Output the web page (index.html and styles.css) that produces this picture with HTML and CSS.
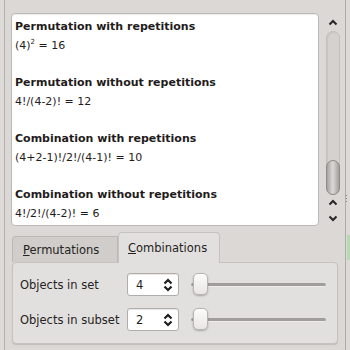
FILE: index.html
```html
<!DOCTYPE html>
<html>
<head>
<meta charset="utf-8">
<link rel="stylesheet" href="styles.css">
</head>
<body>
<div class="window">
  <div class="edge-left"></div>
  <div class="main">
    <div class="top">
      <div class="textview">
        <div class="entry">
          <div class="title">Permutation with repetitions</div>
          <div class="formula">(4)<sup>2</sup> = 16</div>
        </div>
        <div class="entry">
          <div class="title">Permutation without repetitions</div>
          <div class="formula">4!/(4-2)! = 12</div>
        </div>
        <div class="entry">
          <div class="title">Combination with repetitions</div>
          <div class="formula">(4+2-1)!/2!/(4-1)! = 10</div>
        </div>
        <div class="entry">
          <div class="title">Combination without repetitions</div>
          <div class="formula">4!/2!/(4-2)! = 6</div>
        </div>
      </div>
      <div class="scrollbar">
        <div class="arrow-top">
          <svg width="10" height="7" viewBox="0 0 10 7"><polyline points="1.5,5.5 5,2 8.5,5.5" fill="none" stroke="#262626" stroke-width="2"/></svg>
        </div>
        <div class="groove">
          <div class="handle"></div>
        </div>
        <div class="arrows-bottom">
          <svg width="10" height="7" viewBox="0 0 10 7"><polyline points="1.5,5.5 5,2 8.5,5.5" fill="none" stroke="#262626" stroke-width="2"/></svg>
          <svg width="10" height="7" viewBox="0 0 10 7"><polyline points="1.5,1.5 5,5 8.5,1.5" fill="none" stroke="#262626" stroke-width="2"/></svg>
        </div>
      </div>
    </div>
    <div class="tabbar">
      <div class="tab"><span class="ul">P</span>ermutations</div>
      <div class="tab active"><span class="ul">C</span>ombinations</div>
    </div>
    <div class="panel">
      <div class="row">
        <div class="label">Objects in set</div>
        <div class="spin"><span class="val">4</span>
          <svg width="10" height="14" viewBox="0 0 10 14"><polyline points="1.5,5.5 5,2 8.5,5.5" fill="none" stroke="#1e1e1e" stroke-width="2.2"/><polyline points="1.5,8.5 5,12 8.5,8.5" fill="none" stroke="#1e1e1e" stroke-width="2.2"/></svg>
        </div>
        <div class="slider"><div class="sgroove"></div><div class="shandle"></div></div>
      </div>
      <div class="row">
        <div class="label">Objects in subset</div>
        <div class="spin"><span class="val">2</span>
          <svg width="10" height="14" viewBox="0 0 10 14"><polyline points="1.5,5.5 5,2 8.5,5.5" fill="none" stroke="#1e1e1e" stroke-width="2.2"/><polyline points="1.5,8.5 5,12 8.5,8.5" fill="none" stroke="#1e1e1e" stroke-width="2.2"/></svg>
        </div>
        <div class="slider"><div class="sgroove"></div><div class="shandle"></div></div>
      </div>
    </div>
  </div>
  <div class="edge-right">
    <div class="grip"></div>
    <div class="green"></div>
  </div>
</div>
</body>
</html>
```
FILE: styles.css
```css
html, body {
  margin: 0;
  padding: 0;
}
body {
  width: 350px;
  height: 350px;
  overflow: hidden;
  background: #dbd8d5;
  font-family: "DejaVu Sans", "Liberation Sans", sans-serif;
  color: #1f1c1b;
}
.window {
  display: flex;
  height: 350px;
}
.edge-left {
  width: 4px;
  background: #dddad7;
  border-right: 1px solid #b3b0ad;
}
.main {
  width: 340px;
  display: flex;
  flex-direction: column;
  padding: 13px 0 0 6px;
  box-sizing: border-box;
}
.top {
  display: flex;
  height: 213px;
}
.textview {
  width: 308px;
  height: 213px;
  box-sizing: border-box;
  background: #ffffff;
  border: 1px solid #bcb9b6;
  border-radius: 4px;
  padding: 4px 3px 3px 3px;
  overflow: hidden;
  font-size: 11px;
  line-height: 18.7px;
  box-shadow: inset 0 1px 1px rgba(0,0,0,0.08);
}
.entry {
  margin-bottom: 18.7px;
}
.title {
  font-weight: bold;
}
.formula sup {
  font-size: 7px;
  vertical-align: 5px;
  line-height: 0;
}
.scrollbar {
  width: 14px;
  margin-left: 7px;
  display: flex;
  flex-direction: column;
  align-items: center;
}
.arrow-top {
  height: 18px;
  display: flex;
  align-items: center;
  justify-content: center;
}
.groove {
  width: 14px;
  height: 164px;
  box-sizing: border-box;
  border: 1px solid #c2bfbc;
  border-radius: 7px;
  background: #d4d1ce;
  display: flex;
  flex-direction: column;
  justify-content: flex-end;
  box-shadow: inset 1px 1px 1px rgba(0,0,0,0.06);
}
.handle {
  height: 33px;
  margin: 0 -1px -1px -1px;
  border: 1px solid #8e8b88;
  border-radius: 7px;
  background: linear-gradient(to right, #a4a19e, #d9d7d5 45%, #cfccca 60%, #a19e9b);
}
.arrows-bottom {
  height: 31px;
  display: flex;
  flex-direction: column;
  align-items: center;
  justify-content: center;
  gap: 9px;
}
.tabbar {
  display: flex;
  align-items: flex-end;
  margin-top: 6px;
  padding-left: 1px;
  height: 30px;
  position: relative;
  z-index: 1;
}
.tab {
  font-size: 11.5px;
  box-sizing: border-box;
  height: 26px;
  width: 106px;
  padding: 6px 0 0 10px;
  background: #d0cdca;
  border: 1px solid #bbb8b5;
  border-bottom: none;
  border-radius: 4px 0 0 0;
  color: #252322;
}
.tab.active {
  height: 31px;
  width: 102px;
  padding: 8px 0 0 9px;
  background: #e2e0de;
  border-color: #c5c2bf;
  border-radius: 4px 4px 0 0;
  margin-bottom: -1px;
}
.ul {
  text-decoration: underline;
}
.panel {
  width: 326px;
  margin-left: 1px;
  box-sizing: border-box;
  background: #e2e0de;
  border: 1px solid #c5c2bf;
  border-radius: 4px;
  padding: 10px 7px 12px 7px;
  display: flex;
  flex-direction: column;
  gap: 12px;
  box-shadow: 0 1px 1px rgba(0,0,0,0.12);
}
.row {
  display: flex;
  align-items: center;
  height: 23px;
}
.label {
  font-size: 11.5px;
  width: 107px;
  color: #252322;
}
.spin {
  width: 52px;
  height: 23px;
  box-sizing: border-box;
  background: #ffffff;
  border: 1px solid #b0adaa;
  border-radius: 3px;
  display: flex;
  align-items: center;
  justify-content: space-between;
  padding: 0 5px 0 8px;
  font-size: 11.5px;
  box-shadow: inset 0 1px 1px rgba(0,0,0,0.1);
}
.slider {
  position: relative;
  margin-left: 12px;
  width: 135px;
  height: 23px;
}
.sgroove {
  position: absolute;
  left: 0;
  right: 0;
  top: 10px;
  height: 3px;
  border-radius: 2px;
  background: #a09d9a;
  border-bottom: 1px solid #eeeceb;
}
.shandle {
  position: absolute;
  left: 2px;
  top: 0;
  width: 15px;
  height: 22px;
  box-sizing: border-box;
  border: 1px solid #b7b4b1;
  border-radius: 5px;
  background: linear-gradient(#fbfbfa, #e9e7e5);
  box-shadow: 0 1px 2px rgba(0,0,0,0.25);
}
.edge-right {
  width: 5px;
  border-left: 1px solid #aeaba8;
  box-sizing: border-box;
  display: flex;
  flex-direction: column;
  background: #dcd9d6;
}
.grip {
  margin-top: 195px;
  height: 7px;
  width: 1px;
  background: repeating-linear-gradient(#8a8785 0 1px, transparent 1px 3px);
}
.green {
  margin-top: 33px;
  margin-left: 1px;
  height: 25px;
  background: #b7d9b0;
}
```
